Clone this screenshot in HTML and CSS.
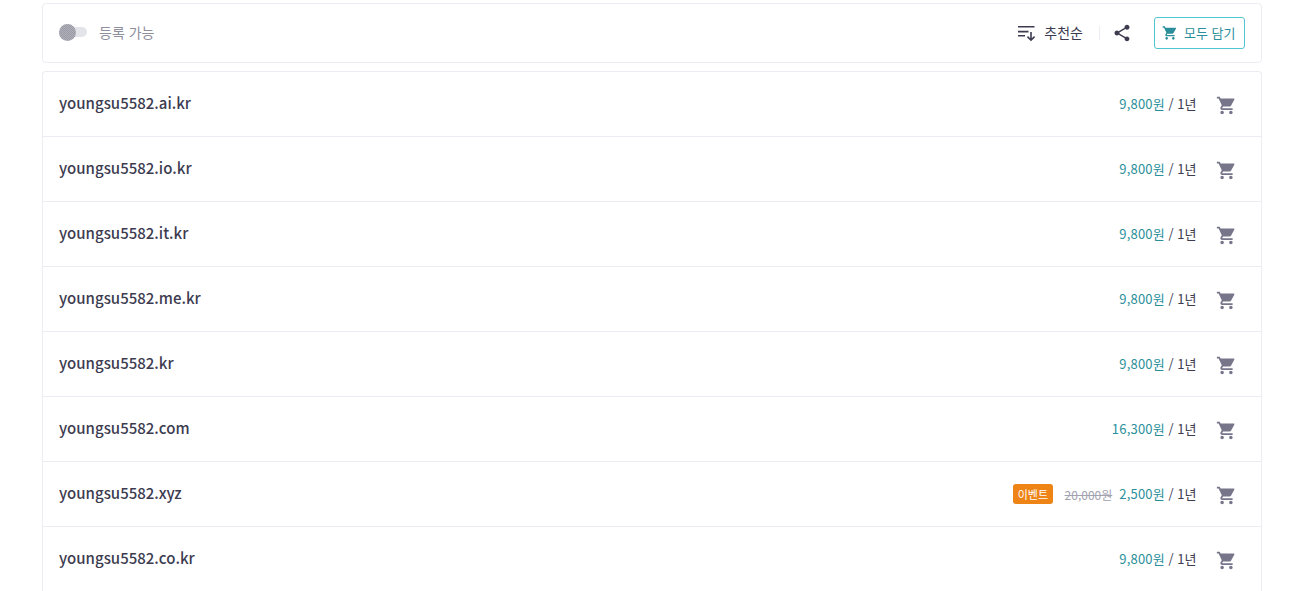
FILE: index.html
```html
<!DOCTYPE html>
<html lang="ko">
<head>
<meta charset="utf-8">
<title>도메인 검색 결과</title>
<link rel="stylesheet" href="styles.css">
</head>
<body>
<svg class="defs" aria-hidden="true"><defs><symbol id="cart" viewBox="0 0 24 24"><path d="M7 18c-1.100 0-1.990.9-1.990 2S5.900 22 7 22s2-.9 2-2-.9-2-2-2zM1 2v2h2l3.600 7.590-1.350 2.450c-.16.280-.25.610-.25.960 0 1.100.9 2 2 2h12v-2H7.420c-.14 0-.25-.11-.25-.25l.03-.12.9-1.630h7.450c.75 0 1.410-.41 1.750-1.030l3.580-6.490A1 1 0 0 0 20 4H5.210l-.94-2H1zm16 16c-1.100 0-1.990.9-1.990 2s.89 2 1.990 2 2-.9 2-2-.9-2-2-2z"/></symbol></defs></svg>
<main class="wrap">
  <section class="toolbar">
    <div class="avail">
      <span class="switch"><span class="knob"></span></span>
      <span class="avail-label">등록 가능</span>
    </div>
    <div class="tools">
      <button class="sort"><svg class="ic-sort" viewBox="0 0 18 18"><path d="M0 2h16.500v1.600H0zM0 6.800h10.500v1.600H0zM0 11h7v1.600H0z"/><path d="M12.200 8h1.600v6.300l2.200-2.200 1.100 1.100-4.100 4.100-4.100-4.100 1.100-1.100 2.200 2.200z"/></svg><span>추천순</span></button>
      <span class="sep"></span>
      <button class="share"><svg class="ic" viewBox="0 0 24 24"><path d="M18 16.080c-.76 0-1.440.3-1.960.77L8.910 12.700c.05-.23.09-.46.09-.7s-.04-.47-.09-.7l7.050-4.110c.54.5 1.250.81 2.040.81 1.660 0 3-1.340 3-3s-1.340-3-3-3-3 1.340-3 3c0 .24.04.47.09.7L8.040 9.810C7.500 9.310 6.790 9 6 9c-1.660 0-3 1.340-3 3s1.340 3 3 3c.79 0 1.500-.31 2.040-.81l7.120 4.160c-.05.21-.08.43-.08.65 0 1.610 1.310 2.920 2.920 2.920s2.920-1.310 2.920-2.920-1.310-2.920-2.920-2.920z"/></svg></button>
      <button class="add-all"><svg class="ic-sm"><use href="#cart"/></svg><span>모두 담기</span></button>
    </div>
  </section>
  <section class="list">
    <div class="row"><span class="name">youngsu5582.ai.kr</span><div class="right"><span class="price"><b>9,800원</b> / 1년</span><svg class="cart"><use href="#cart"/></svg></div></div>
    <div class="row"><span class="name">youngsu5582.io.kr</span><div class="right"><span class="price"><b>9,800원</b> / 1년</span><svg class="cart"><use href="#cart"/></svg></div></div>
    <div class="row"><span class="name">youngsu5582.it.kr</span><div class="right"><span class="price"><b>9,800원</b> / 1년</span><svg class="cart"><use href="#cart"/></svg></div></div>
    <div class="row"><span class="name">youngsu5582.me.kr</span><div class="right"><span class="price"><b>9,800원</b> / 1년</span><svg class="cart"><use href="#cart"/></svg></div></div>
    <div class="row"><span class="name">youngsu5582.kr</span><div class="right"><span class="price"><b>9,800원</b> / 1년</span><svg class="cart"><use href="#cart"/></svg></div></div>
    <div class="row"><span class="name">youngsu5582.com</span><div class="right"><span class="price"><b>16,300원</b> / 1년</span><svg class="cart"><use href="#cart"/></svg></div></div>
    <div class="row"><span class="name">youngsu5582.xyz</span><div class="right"><span class="badge">이벤트</span><s class="old">20,000원</s><span class="price"><b>2,500원</b> / 1년</span><svg class="cart"><use href="#cart"/></svg></div></div>
    <div class="row"><span class="name">youngsu5582.co.kr</span><div class="right"><span class="price"><b>9,800원</b> / 1년</span><svg class="cart"><use href="#cart"/></svg></div></div>
  </section>
</main>
</body>
</html>
```
FILE: styles.css
```css
* { box-sizing: border-box; }
html, body { margin: 0; height: 100%; overflow: hidden; background: #fff; }
body { font-family: "Noto Sans CJK KR", "Noto Sans", sans-serif; color: #3c3b4f; }
.defs { display: none; }
.wrap { width: 1220px; margin-left: 42px; padding-top: 3px; display: flex; flex-direction: column; gap: 8px; }
.toolbar { height: 60px; border: 1px solid #ecedf2; border-radius: 4px; display: flex; align-items: center; justify-content: space-between; padding: 0 16px; }
.avail { display: flex; align-items: center; gap: 12px; margin-top: -2px; }
.switch { position: relative; width: 28px; height: 10px; background: #e3e3ea; border-radius: 5px; display: block; }
.knob { position: absolute; left: 0; top: -3px; width: 17px; height: 17px; border-radius: 50%; background: repeating-conic-gradient(#9a9aa5 0 25%, #b0b0ba 0 50%) 0 0 / 2px 2px; }
.avail-label { font-size: 14px; line-height: 20px; color: #8e8e9c; }
.tools { display: flex; align-items: center; }
button { font: inherit; background: none; border: 0; padding: 0; display: flex; align-items: center; color: inherit; }
.sort { gap: 8px; font-size: 14px; line-height: 20px; color: #3c3b4f; }
.sort span { position: relative; top: -1px; }
.ic-sort { width: 18px; height: 18px; fill: #3c3b4f; display: block; }
.ic { width: 20px; height: 20px; fill: #3c3b4f; display: block; }
.sep { width: 1px; height: 14px; background: #ecedf2; margin: 0 12px 0 16px; }
.share { margin-right: 22px; }
.add-all { width: 91px; height: 32px; border: 1px solid #52c4cf; border-radius: 3px; justify-content: flex-start; padding-left: 7px; gap: 6px; font-size: 13px; color: #2b8f9b; }
.add-all span { position: relative; top: -1px; }
.ic-sm { width: 16px; height: 16px; fill: #2b8f9b; display: block; }
.list { border: 1px solid #ecedf2; border-bottom: 0; border-radius: 4px 4px 0 0; }
.row { height: 65px; display: flex; align-items: center; justify-content: space-between; padding: 0 16px; border-bottom: 1px solid #ecedf2; }
.name { font-size: 15px; line-height: 24px; font-weight: 500; color: #3c3b4f; margin-top: -3px; }
.right { display: flex; align-items: center; }
.price { font-size: 13px; line-height: 20px; color: #3c3b4f; margin-top: -1px; }
.price b { font-weight: 400; letter-spacing: .2px; color: #2b8f9b; }
.cart { width: 21px; height: 21px; fill: #77758a; margin: 2px 8.500px 0 19px; display: block; }
.badge { background: #ee8316; color: #fff; font-size: 11px; line-height: 20px; height: 20px; padding: 0 4.500px; border-radius: 3px; margin-right: 12px; }
.old { font-size: 12px; color: #a2a2b0; margin-right: 7px; }
```
